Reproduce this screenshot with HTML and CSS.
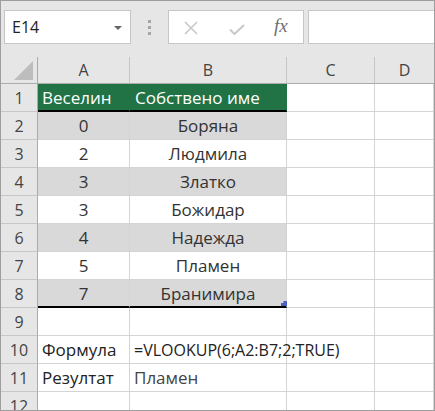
FILE: index.html
```html
<!DOCTYPE html>
<html>
<head>
<meta charset="utf-8">
<link rel="stylesheet" href="styles.css">
</head>
<body>
<div class="app">
  <div class="toolbar">
    <div class="namebox">
      <span class="ref">E14</span>
      <span class="caret"></span>
    </div>
    <div class="dots"><span></span><span></span><span></span></div>
    <div class="fbtns">
      <svg class="ico-x" width="14" height="14" viewBox="0 0 14 14"><path d="M1 1 L13 13 M13 1 L1 13" stroke="#c8c8c8" stroke-width="1.6" fill="none"/></svg>
      <svg class="ico-ok" width="16" height="11" viewBox="0 0 16 11"><path d="M1 5.5 L5.5 10 L15 1" stroke="#c8c8c8" stroke-width="2" fill="none"/></svg>
      <span class="fx">fx</span>
    </div>
    <div class="finput"></div>
  </div>
  <div class="sheet">
    <div class="corner"><span class="tri"></span></div>
    <div class="ch">A</div>
    <div class="ch">B</div>
    <div class="ch">C</div>
    <div class="ch ch-last">D</div>

    <div class="rh">1</div>
    <div class="c hd hd-a">Веселин</div>
    <div class="c hd">Собствено име</div>
    <div class="c"></div>
    <div class="c"></div>

    <div class="rh">2</div>
    <div class="c tb g ctr">0</div>
    <div class="c tb g ctr">Боряна</div>
    <div class="c"></div>
    <div class="c"></div>

    <div class="rh">3</div>
    <div class="c tb ctr">2</div>
    <div class="c tb ctr">Людмила</div>
    <div class="c"></div>
    <div class="c"></div>

    <div class="rh">4</div>
    <div class="c tb g ctr">3</div>
    <div class="c tb g ctr">Златко</div>
    <div class="c"></div>
    <div class="c"></div>

    <div class="rh">5</div>
    <div class="c tb ctr">3</div>
    <div class="c tb ctr">Божидар</div>
    <div class="c"></div>
    <div class="c"></div>

    <div class="rh">6</div>
    <div class="c tb g ctr">4</div>
    <div class="c tb g ctr">Надежда</div>
    <div class="c"></div>
    <div class="c"></div>

    <div class="rh">7</div>
    <div class="c tb ctr">5</div>
    <div class="c tb ctr">Пламен</div>
    <div class="c"></div>
    <div class="c"></div>

    <div class="rh">8</div>
    <div class="c tb g ctr last">7</div>
    <div class="c tb g ctr last handle">Бранимира</div>
    <div class="c"></div>
    <div class="c"></div>

    <div class="rh">9</div>
    <div class="c"></div>
    <div class="c"></div>
    <div class="c"></div>
    <div class="c"></div>

    <div class="rh">10</div>
    <div class="c lbl">Формула</div>
    <div class="c lbl over">=VLOOKUP(6;A2:B7;2;TRUE)</div>
    <div class="c"></div>
    <div class="c"></div>

    <div class="rh">11</div>
    <div class="c lbl">Резултат</div>
    <div class="c lbl res">Пламен</div>
    <div class="c"></div>
    <div class="c"></div>

    <div class="rh">12</div>
    <div class="c"></div>
    <div class="c"></div>
    <div class="c"></div>
    <div class="c"></div>
  </div>
</div>
</body>
</html>
```
FILE: styles.css
```css
* { box-sizing: border-box; }
html, body { margin: 0; padding: 0; background: #fff; }
.app {
  width: 435px;
  height: 411px;
  border: 1px solid #9e9e9e;
  overflow: hidden;
  font-family: "Open Sans", "Noto Sans", sans-serif;
  background: #fff;
}
.toolbar {
  height: 56px;
  background: #e6e6e6;
  display: flex;
  align-items: flex-start;
  padding-top: 9px;
}
.namebox {
  margin-left: 3px;
  width: 127px;
  height: 34px;
  background: #fff;
  border: 1px solid #c6c6c6;
  display: flex;
  align-items: center;
  justify-content: space-between;
  padding: 0 8px 0 7px;
}
.ref { font-size: 16px; color: #222; }
.caret {
  width: 0; height: 0;
  border-left: 4px solid transparent;
  border-right: 4px solid transparent;
  border-top: 4px solid #666;
  margin-top: 1px;
}
.dots {
  width: 37px;
  height: 34px;
  display: flex;
  flex-direction: column;
  align-items: center;
  justify-content: center;
  gap: 3px;
}
.dots span { width: 3px; height: 3px; background: #a6a6a6; }
.fbtns {
  width: 136px;
  height: 34px;
  background: #fff;
  border: 1px solid #c6c6c6;
  display: flex;
  align-items: center;
  padding-left: 15px;
}
.ico-x { margin-top: 1px; }
.ico-ok { margin-left: 31px; margin-top: 5px; }
.fx {
  margin-left: 29px;
  font-family: "Liberation Serif", "DejaVu Serif", serif;
  font-style: italic;
  font-size: 19px;
  color: #6e6e6e;
  margin-top: -2px;
}
.finput {
  margin-left: 4px;
  flex: 1;
  height: 34px;
  background: #fff;
  border: 1px solid #c6c6c6;
  border-right: none;
}
.sheet {
  display: grid;
  grid-template-columns: 37px 92px 157px 88px 1fr;
  grid-template-rows: 27px repeat(11, 28px) 28px;
}
.corner {
  background: #e6e6e6;
  border-right: 1px solid #ababab;
  border-bottom: 1px solid #ababab;
  position: relative;
}
.tri {
  position: absolute;
  left: 13px;
  top: 4px;
  width: 19px;
  height: 19px;
  background: #bdbdbd;
  clip-path: polygon(100% 0, 100% 100%, 0 100%);
}
.ch {
  background: #e6e6e6;
  border-right: 1px solid #c6c6c6;
  border-bottom: 1px solid #ababab;
  display: flex;
  align-items: center;
  justify-content: center;
  font-size: 16px;
  color: #444;
}
.ch-last { border-right: none; }
.rh {
  background: #e6e6e6;
  border-right: 1px solid #ababab;
  border-bottom: 1px solid #c6c6c6;
  display: flex;
  align-items: center;
  justify-content: center;
  font-size: 16px;
  color: #444;
}
.c {
  border-right: 1px solid #d4d4d4;
  border-bottom: 1px solid #d4d4d4;
  display: flex;
  align-items: center;
  font-size: 17px;
  color: #333;
  white-space: nowrap;
  min-width: 0;
}
.hd {
  background: #217346;
  color: #fff;
  border-right-color: #217346;
  border-bottom: 2px solid #000;
  padding-left: 5px;
}
.hd-a { padding-left: 4px; }
.g { background: #d9d9d9; }
.ctr { justify-content: center; }
.last { border-bottom: 2px solid #000; }
.handle { position: relative; }
.handle::after {
  content: "";
  position: absolute;
  right: -1px;
  bottom: 0;
  width: 6px;
  height: 5px;
  background: #4a5fc1;
  clip-path: polygon(100% 0, 100% 100%, 0 100%, 0 40%, 40% 40%, 40% 0);
}
.lbl { padding-left: 4px; color: #222; }
.over { overflow: visible; position: relative; z-index: 1; font-size: 16px; }
.res { color: #444; }
```
